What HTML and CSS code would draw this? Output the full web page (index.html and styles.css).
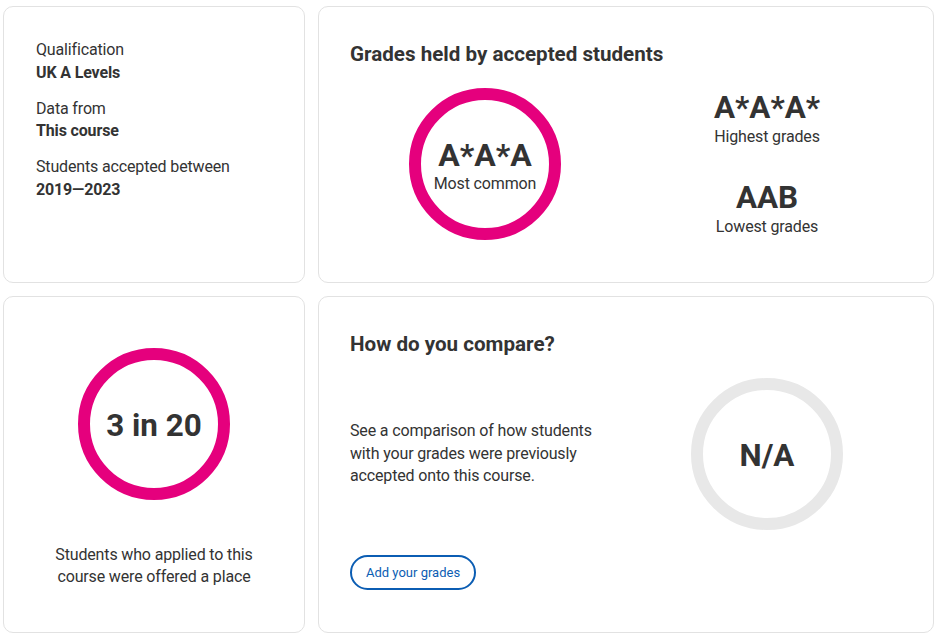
FILE: index.html
```
<!DOCTYPE html>
<html lang="en">
<head>
    <meta charset="UTF-8">
    <meta name="viewport" content="width=device-width, initial-scale=1.0">
    <title>Entry grades</title>
    <link rel="stylesheet" href="styles.css">
</head>
<body>
    <div class="grid">
        <div class="card details">
            <div class="detail">
                <div>Qualification</div>
                <div class="value">UK A Levels</div>
            </div>
            <div class="detail">
                <div>Data from</div>
                <div class="value">This course</div>
            </div>
            <div class="detail">
                <div>Students accepted between</div>
                <div class="value">2019&mdash;2023</div>
            </div>
        </div>

        <div class="card">
            <h2>Grades held by accepted students</h2>
            <div class="split">
                <div class="col-center">
                    <div class="ring">
                        <div class="ring-value common">A*A*A</div>
                        <div class="label">Most common</div>
                    </div>
                </div>
                <div class="col-center range">
                    <div class="grade">
                        <div class="grade-value">A*A*A*</div>
                        <div class="label">Highest grades</div>
                    </div>
                    <div class="grade">
                        <div class="grade-value">AAB</div>
                        <div class="label">Lowest grades</div>
                    </div>
                </div>
            </div>
        </div>

        <div class="card offers">
            <div class="ring">
                <div class="ring-value">3 in 20</div>
            </div>
            <p class="offers-text">Students who applied to this<br>course were offered a place</p>
        </div>

        <div class="card">
            <h2>How do you compare?</h2>
            <div class="split compare">
                <p class="compare-text">See a comparison of how students with your grades were previously accepted onto this course.</p>
                <div class="col-center">
                    <div class="ring empty">
                        <div class="ring-value">N/A</div>
                    </div>
                </div>
            </div>
            <button class="btn-outline">Add your grades</button>
        </div>
    </div>
</body>
</html>
```
FILE: styles.css
```
:root {
    --accent-color: #e5007d;
    --text-color: #333333;
    --border-color: #e2e2e2;
    --ring-empty: #e8e8e8;
    --link-color: #0b5db3;
}
body {
    font-family: Roboto, 'Liberation Sans', Arial, sans-serif;
    color: var(--text-color);
    background-color: #ffffff;
    margin: 0;
    padding: 6px 8px 6px 3px;
    font-size: 16px;
    line-height: 22.5px;
    letter-spacing: -0.15px;
}
.grid {
    display: grid;
    grid-template-columns: 302px 1fr;
    grid-template-rows: 277px 337px;
    gap: 13px;
}
.card {
    border: 1px solid var(--border-color);
    border-radius: 10px;
    padding: 31px;
    box-sizing: border-box;
}
h2 {
    margin: 0 0 18px;
    font-size: 20.6px;
    line-height: 32px;
    font-weight: 700;
    letter-spacing: 0;
}
.details {
    padding-top: 32px;
    padding-left: 32px;
}
.detail {
    margin-bottom: 13.5px;
}
.value {
    font-weight: 700;
}
.split {
    display: grid;
    grid-template-columns: 1fr 1fr;
    column-gap: 12px;
}
.col-center {
    display: flex;
    flex-direction: column;
    align-items: center;
    justify-content: center;
}
.ring {
    width: 152px;
    height: 152px;
    border: 12px solid var(--accent-color);
    border-radius: 50%;
    box-sizing: border-box;
    display: flex;
    flex-direction: column;
    align-items: center;
    justify-content: center;
}
.ring.empty {
    border-color: var(--ring-empty);
}
.ring-value {
    font-size: 31.4px;
    line-height: 36px;
    font-weight: 700;
    letter-spacing: 0;
    padding-top: 4px;
}
.ring-value.common {
    font-size: 32px;
    line-height: 34px;
    padding-top: 0;
    margin-top: 4px;
}
.label {
    line-height: 23px;
}
.range {
    gap: 32px;
}
.grade {
    text-align: center;
}
.grade-value {
    font-size: 31.4px;
    line-height: 35px;
    font-weight: 700;
    letter-spacing: 0;
}
.offers {
    display: flex;
    flex-direction: column;
    align-items: center;
    padding-top: 51px;
}
.offers-text {
    margin: 44px 0 0;
    text-align: center;
    line-height: 22px;
}
.compare {
    align-items: center;
    margin-top: 2px;
}
.compare-text {
    margin: 0;
}
.btn-outline {
    margin-top: 25px;
    font-family: inherit;
    font-size: 13px;
    line-height: 17px;
    color: var(--link-color);
    background-color: #ffffff;
    border: 2px solid var(--link-color);
    border-radius: 50px;
    padding: 7px 14px;
    cursor: pointer;
}
```
